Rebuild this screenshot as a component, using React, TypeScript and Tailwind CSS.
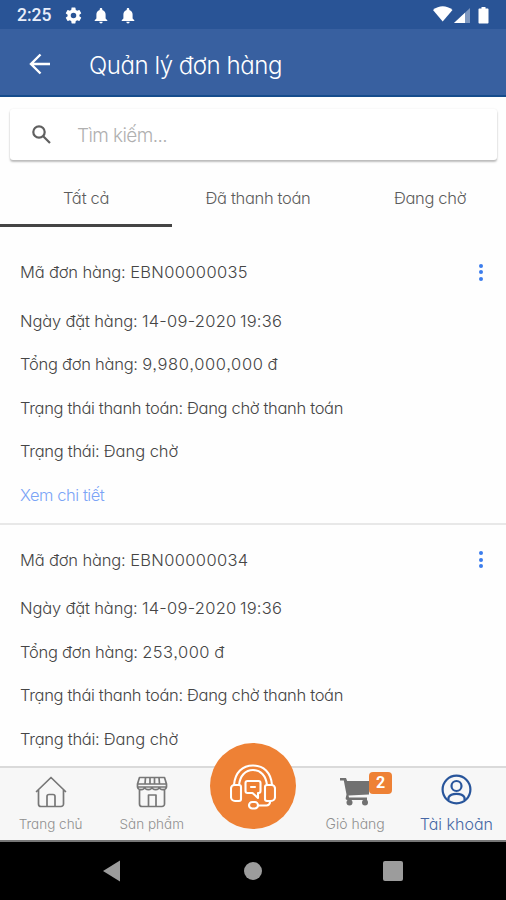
import type { ReactNode } from 'react';

type Line = { label: string; value: string; labelClass: string; valueClass: string };
type Order = { id: string; lines: Line[]; detail?: boolean };

const payment: Line = {
  label: 'Trạng thái thanh toán: ',
  value: 'Đang chờ thanh toán',
  labelClass: 'tracking-[-0.33px]',
  valueClass: 'tracking-[-0.33px]',
};
const state: Line = {
  label: 'Trạng thái: ',
  value: 'Đang chờ',
  labelClass: 'tracking-[-0.28px]',
  valueClass: 'tracking-[-0.05px]',
};
const placed: Line = {
  label: 'Ngày đặt hàng: ',
  value: '14-09-2020 19:36',
  labelClass: 'tracking-[-0.15px]',
  valueClass: 'tracking-[0.25px] [word-spacing:-1.500px]',
};

const orders: Order[] = [
  {
    id: 'EBN00000035',
    detail: true,
    lines: [
      placed,
      { label: 'Tổng đơn hàng: ', value: '9,980,000,000 đ', labelClass: 'tracking-[-0.25px]', valueClass: 'tracking-[0.65px] [word-spacing:-1.500px]' },
      payment,
      state,
    ],
  },
  {
    id: 'EBN00000034',
    lines: [
      placed,
      { label: 'Tổng đơn hàng: ', value: '253,000 đ', labelClass: 'tracking-[-0.25px]', valueClass: 'tracking-[0.5px] [word-spacing:-1px]' },
      payment,
      state,
    ],
  },
];

function Bell() {
  return (
    <svg className="h-[17px] w-[14px]" viewBox="0 0 14 17" fill="white">
      <path d="M7 1c.8 0 1.300.5 1.300 1.300v.6c2.200.6 3.300 2.400 3.300 4.600v4l1.700 1.800v.8H.7v-.8l1.700-1.800v-4c0-2.200 1.100-4 3.300-4.600v-.6C5.700 1.500 6.200 1 7 1zM5.300 14.700h3.400a1.700 1.700 0 0 1-3.400 0z" />
    </svg>
  );
}

function StatusBar() {
  return (
    <div className="flex h-[29px] items-center bg-[#295496] pt-px">
      <span className="ml-[17px] w-[35px] whitespace-nowrap pt-[2px] font-[Roboto] text-[17.500px] font-medium leading-none text-[#e8eefa]">2:25</span>
      <svg className="ml-[12px] h-[19px] w-[19px]" viewBox="0 0 24 24" fill="white">
        <path fillRule="evenodd" d="M19.430 12.980c.04-.32.07-.64.07-.98s-.03-.66-.07-.98l2.110-1.650c.19-.15.24-.42.12-.64l-2-3.460c-.12-.22-.39-.3-.61-.22l-2.490 1c-.52-.4-1.080-.73-1.690-.98l-.38-2.650A.49.49 0 0 0 14 2h-4c-.25 0-.46.18-.49.42l-.38 2.650c-.61.25-1.170.59-1.690.98l-2.490-1c-.23-.09-.49 0-.61.22l-2 3.460c-.13.22-.07.49.12.64l2.110 1.650c-.04.32-.07.65-.07.98s.03.66.07.98l-2.110 1.650c-.19.15-.24.42-.12.64l2 3.460c.12.22.39.3.61.22l2.490-1c.52.4 1.080.73 1.690.98l.38 2.650c.03.24.24.42.49.42h4c.25 0 .46-.18.49-.42l.38-2.650c.61-.25 1.170-.59 1.690-.98l2.490 1c.23.09.49 0 .61-.22l2-3.460c.12-.22.07-.49-.12-.64zM12 15.500a3.500 3.500 0 1 1 0-7 3.500 3.500 0 0 1 0 7z" />
      </svg>
      <div className="ml-[11px] flex gap-[13px]">
        <Bell />
        <Bell />
      </div>
      <svg className="ml-auto mr-[16px] h-[18px] w-[58px]" viewBox="0 0 58 18" fill="white">
        <path d="M1 4C7-1 14.500-1 20.500 4L10.700 15.500z" />
        <path d="M22 17L38 2v15z" opacity=".4" />
        <path d="M22 17L33 6.700V17z" />
        <path d="M46.500 3.500c0-.6.4-1 1-1h2V1h4v1.500h2c.6 0 1 .4 1 1v13c0 .6-.4 1-1 1h-8c-.6 0-1-.4-1-1z" />
      </svg>
    </div>
  );
}

function OrderCard({ order }: { order: Order }) {
  return (
    <section className="h-[287.500px] shrink-0 border-b-2 border-[#e8e8e8] pl-5 pt-[13.500px] text-[16.500px] text-[#454545]">
      <div className="mb-[5px] flex h-[43.500px] items-center justify-between">
        <p>
          <span className="tracking-[-0.15px]">Mã đơn hàng: </span>
          <span className="tracking-[0.35px]">{order.id}</span>
        </p>
        <div className="mr-[23px] flex w-1 flex-col gap-[2.500px]">
          <i className="h-1 w-1 rounded-full bg-[#3b7ded]" />
          <i className="h-1 w-1 rounded-full bg-[#3b7ded]" />
          <i className="h-1 w-1 rounded-full bg-[#3b7ded]" />
        </div>
      </div>
      {order.lines.map((l) => (
        <div key={l.label} className="flex h-[43.500px] items-center">
          <p>
            <span className={l.labelClass}>{l.label}</span>
            <span className={l.valueClass}>{l.value}</span>
          </p>
        </div>
      ))}
      {order.detail && (
        <div className="flex h-[43.500px] items-center tracking-[-0.45px] text-[#7ba4f6]">Xem chi tiết</div>
      )}
    </section>
  );
}

function NavItem({ icon, label, className }: { icon: ReactNode; label: string; className: string }) {
  return (
    <div className={`flex w-[101.200px] flex-col items-center whitespace-nowrap ${className}`}>
      <div className="flex h-[46px] items-center pt-[2px]">{icon}</div>
      <span className="leading-[20px]">{label}</span>
    </div>
  );
}

const HomeIcon = (
  <svg className="h-8 w-8" viewBox="0 0 32 32" fill="none" stroke="#777" strokeWidth="1.700" strokeLinejoin="round" strokeLinecap="round">
    <path d="M1.500 15.500L16 1.500l14.500 14M3.500 14v14a2.500 2.500 0 0 0 2.500 2.500h20a2.500 2.500 0 0 0 2.500-2.500V14M12 30V20.500a2 2 0 0 1 2-2h4a2 2 0 0 1 2 2V30" />
  </svg>
);

const StoreIcon = (
  <svg className="h-8 w-8" viewBox="0 0 32 32" fill="none" stroke="#777" strokeWidth="1.700" strokeLinejoin="round" strokeLinecap="round">
    <path d="M3.500 1.500h25L30.500 8v3H1.500V8zM1.500 8h29M9.500 1.500L9 8M14 1.500V8M18.500 1.500V8M23 1.500l.5 6.500M1.500 11c.5 3.500 6.700 3.500 7.200 0c.5 3.500 6.800 3.500 7.300 0c.5 3.500 6.800 3.500 7.300 0c.5 3.500 6.700 3.500 7.200 0M3.500 14V28a2.500 2.500 0 0 0 2.500 2.500h20a2.500 2.500 0 0 0 2.500-2.500V14M12.500 30V19h7.500v11" />
  </svg>
);

const CartIcon = (
  <div className="relative">
    <svg className="h-8 w-8" viewBox="0 0 32 32" fill="#717171">
      <path d="M1 2h6l1.200 3H30v13.500L9.500 19.500 10 21.500H28V24H8.500c-1.500 0-2-.8-1.800-2L7.500 18.500 4.800 4.500H1z" />
      <circle cx="10.500" cy="26.500" r="3" />
      <circle cx="26" cy="26.500" r="3" />
    </svg>
    <span className="absolute left-[30px] top-[-4px] flex h-[22px] w-[23px] items-center justify-center rounded-[4px] bg-[#ee8135] font-[Roboto] text-[16px] font-bold leading-none text-white">2</span>
  </div>
);

const AccountIcon = (
  <svg className="-mt-[5px] h-[31px] w-[31px]" viewBox="0 0 31 31" fill="none" stroke="#28559b" strokeWidth="2.200">
    <circle cx="15.500" cy="15.500" r="13.900" />
    <circle cx="15.500" cy="12" r="5" />
    <path d="M7.500 26v-2.500c2.500-4.700 13.500-4.700 16 0V26" />
  </svg>
);

function SupportButton() {
  return (
    <div className="-mt-[25px] ml-px flex h-[86px] w-[86px] items-center justify-center self-start rounded-full bg-[#ee8135]">
      <svg className="mt-px h-[46px] w-[46px]" viewBox="0 0 46 46" fill="none" stroke="white" strokeWidth="2.100" strokeLinejoin="round" strokeLinecap="round">
        <path d="M4 21C5 8.500 12.500 1.500 23 1.500S41 8.500 42 21M9 21C10 11.500 15.500 6 23 6s13 5.500 14 15" />
        <path d="M4.500 21H9a2 2 0 0 1 2 2v12a2 2 0 0 1-2 2H5a4 4 0 0 1-4-4v-8.500A3.500 3.500 0 0 1 4.500 21zM37 21h4.500A3.500 3.500 0 0 1 45 24.500V33a4 4 0 0 1-4 4h-4a2 2 0 0 1-2-2V23a2 2 0 0 1 2-2z" />
        <path d="M17.500 17h11a2 2 0 0 1 2 2v8a2 2 0 0 1-2 2H28v5l-5.500-5h-5a2 2 0 0 1-2-2v-8a2 2 0 0 1 2-2zM21 23h4M40 37v1a3.500 3.500 0 0 1-3.500 3.500H28" />
        <rect x="19" y="38" width="9" height="6.500" rx="3.200" />
      </svg>
    </div>
  );
}

export default function App() {
  return (
    <div className="flex h-[900px] w-[506px] flex-col overflow-hidden bg-[#fefefe] font-[Inter,sans-serif] font-light [font-feature-settings:'cv11'_1,'ss03'_1] leading-none">
      <StatusBar />
      <header className="flex h-[68px] shrink-0 items-center border-b-2 border-[#164c8c] bg-[#3860a0] text-white">
        <svg className="ml-[29px] mt-[3px] h-[22px] w-[22px]" viewBox="0 0 22 22" fill="none" stroke="white" strokeWidth="2.400">
          <path d="M21 11H2.500M11.500 1.500L2 11l9.500 9.500" />
        </svg>
        <h1 className="ml-[38px] pt-[7px] text-[24px] tracking-[-0.45px]">Quản lý đơn hàng</h1>
      </header>
      <div className="ml-[10px] mr-[9px] mt-[12px] flex h-[51px] shrink-0 items-center rounded-[3px] bg-white shadow-[0_2px_2px_rgba(0,0,0,0.25),0_0_2px_rgba(0,0,0,0.08)]">
        <svg className="ml-[22px] h-[19px] w-[19px]" viewBox="0 0 19 19" fill="none" stroke="#606060" strokeWidth="2.200">
          <circle cx="7" cy="7" r="5.700" />
          <path d="M11 11l7 7" />
        </svg>
        <span className="ml-[26px] pt-px text-[19px] tracking-[-0.6px] text-[#b0b0b0]">Tìm kiếm...</span>
      </div>
      <nav className="flex h-[67px] w-[516px] shrink-0 text-[16.500px] tracking-[-0.33px] text-[#5c5c5c]">
        <div className="flex w-[172px] items-center justify-center border-b-[3px] border-[#444] pb-px pt-[13px]">Tất cả</div>
        <div className="flex w-[172px] items-center justify-center pb-[4px] pt-[13px]">Đã thanh toán</div>
        <div className="flex w-[172px] items-center justify-center pb-[4px] pt-[13px]">Đang chờ</div>
      </nav>
      <main className="flex min-h-0 flex-1 flex-col overflow-hidden pt-[10px]">
        {orders.map((o) => (
          <OrderCard key={o.id} order={o} />
        ))}
      </main>
      <footer className="flex h-[76px] shrink-0 border-y-2 border-t-[#dadada] border-b-[#777] bg-[#f7f7f7]">
        <NavItem icon={HomeIcon} label="Trang chủ" className="text-[13.500px] text-[#8f8f8f]" />
        <NavItem icon={StoreIcon} label="Sản phẩm" className="text-[13.500px] text-[#8f8f8f]" />
        <div className="flex w-[101.200px] justify-center">
          <SupportButton />
        </div>
        <NavItem icon={CartIcon} label="Giỏ hàng" className="pl-[2px] text-[14px] text-[#8f8f8f]" />
        <NavItem icon={AccountIcon} label="Tài khoản" className="pl-[2px] text-[16px] text-[#4667a5]" />
      </footer>
      <div className="flex h-[58px] shrink-0 items-center justify-center bg-black">
        <svg className="h-[22px] w-[302px]" viewBox="0 0 302 22" fill="#9c9c9c">
          <path d="M18 .5v21L1 11z" />
          <circle cx="151" cy="11" r="9" />
          <rect x="281" y="1" width="20" height="20" rx="2" />
        </svg>
      </div>
    </div>
  );
}
